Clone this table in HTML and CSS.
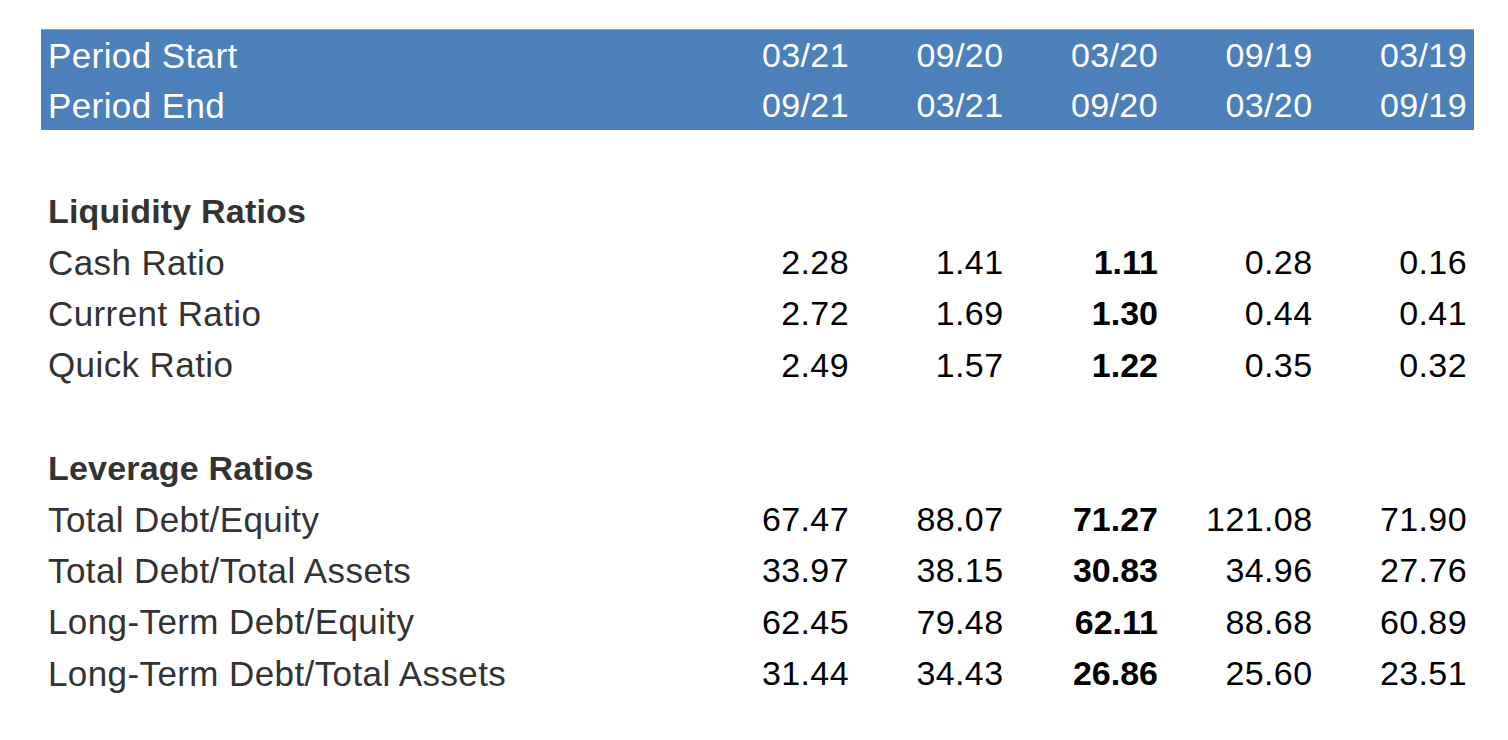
FILE: index.html
```html
<!DOCTYPE html>
<html>
<head>
<meta charset="utf-8">
<link rel="stylesheet" href="styles.css">
</head>
<body>
<div class="sheet">
  <div class="head">
    <div class="row">
      <div class="label">Period Start</div>
      <div class="num">03/21</div><div class="num">09/20</div><div class="num">03/20</div><div class="num">09/19</div><div class="num">03/19</div>
    </div>
    <div class="row">
      <div class="label">Period End</div>
      <div class="num">09/21</div><div class="num">03/21</div><div class="num">09/20</div><div class="num">03/20</div><div class="num">09/19</div>
    </div>
  </div>
  <div class="row blank first"></div>
  <div class="row"><div class="label section">Liquidity Ratios</div></div>
  <div class="row">
    <div class="label">Cash Ratio</div>
    <div class="num">2.28</div><div class="num">1.41</div><div class="num hl">1.11</div><div class="num">0.28</div><div class="num">0.16</div>
  </div>
  <div class="row">
    <div class="label">Current Ratio</div>
    <div class="num">2.72</div><div class="num">1.69</div><div class="num hl">1.30</div><div class="num">0.44</div><div class="num">0.41</div>
  </div>
  <div class="row">
    <div class="label">Quick Ratio</div>
    <div class="num">2.49</div><div class="num">1.57</div><div class="num hl">1.22</div><div class="num">0.35</div><div class="num">0.32</div>
  </div>
  <div class="row blank"></div>
  <div class="row"><div class="label section">Leverage Ratios</div></div>
  <div class="row">
    <div class="label">Total Debt/Equity</div>
    <div class="num">67.47</div><div class="num">88.07</div><div class="num hl">71.27</div><div class="num">121.08</div><div class="num">71.90</div>
  </div>
  <div class="row">
    <div class="label">Total Debt/Total Assets</div>
    <div class="num">33.97</div><div class="num">38.15</div><div class="num hl">30.83</div><div class="num">34.96</div><div class="num">27.76</div>
  </div>
  <div class="row">
    <div class="label">Long-Term Debt/Equity</div>
    <div class="num">62.45</div><div class="num">79.48</div><div class="num hl">62.11</div><div class="num">88.68</div><div class="num">60.89</div>
  </div>
  <div class="row">
    <div class="label">Long-Term Debt/Total Assets</div>
    <div class="num">31.44</div><div class="num">34.43</div><div class="num hl">26.86</div><div class="num">25.60</div><div class="num">23.51</div>
  </div>
</div>
</body>
</html>
```
FILE: styles.css
```css
html, body {
  margin: 0;
  padding: 0;
  background: #ffffff;
}
.sheet {
  padding: 29px 0 0 41px;
  width: 1433px;
  font-family: "Liberation Sans", Arial, Helvetica, sans-serif;
  font-size: 34px;
}
.head {
  background: #4c80bb;
  border-top: 1px solid #7ea3cf;
  color: #ffffff;
}
.head .label, .head .num {
  color: #ffffff;
}
.row {
  display: grid;
  grid-template-columns: 660.5px repeat(5, 154.5px);
  height: 51.4px;
  align-items: center;
  line-height: 1;
}
.head .row {
  height: 50px;
}
.row.first {
  height: 55px;
}
.label {
  padding-left: 7px;
  color: #333333;
  font-size: 35px;
  letter-spacing: 0.4px;
}
.section {
  font-weight: bold;
  font-size: 34px;
  letter-spacing: 0.2px;
}
.num {
  text-align: right;
  padding-right: 7px;
  color: #000000;
  letter-spacing: 0.4px;
}
.hl {
  font-weight: bold;
  letter-spacing: 0;
}
```
